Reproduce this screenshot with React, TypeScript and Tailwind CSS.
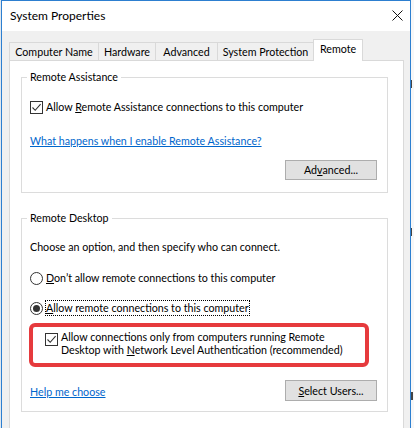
import React from "react";

function CheckBox() {
  return (
    <span className="inline-flex shrink-0 w-[13px] h-[13px] border border-[#333333] bg-white items-center justify-center">
      <svg width="11" height="11" viewBox="0 0 11 11">
        <path d="M1.5 5.5 L4.2 8.3 L9.6 2.2" fill="none" stroke="#333333" strokeWidth="1.1" />
      </svg>
    </span>
  );
}

function Radio({ on }: { on?: boolean }) {
  return (
    <span className="inline-flex shrink-0 w-[13px] h-[13px] rounded-full border border-[#333333] bg-white items-center justify-center">
      {on ? <span className="w-[7px] h-[7px] rounded-full bg-[#333333]" /> : null}
    </span>
  );
}

const tabs = [
  { label: "Computer Name", w: "w-[89px]" },
  { label: "Hardware", w: "w-[57px]" },
  { label: "Advanced", w: "w-[62px]" },
  { label: "System Protection", w: "w-[96px]" },
];

export default function App() {
  return (
    <div className="w-[414px] h-[428px] overflow-hidden flex bg-[#e4ebf2] font-['Lato',sans-serif] text-[10.7px] leading-[16px] text-black">
      <div className="w-[1px] shrink-0 bg-[#dfe7ef]" />
      {/* Window */}
      <div className="w-[410px] h-[440px] shrink-0 flex flex-col border-l border-r border-t border-[#2d7fd0] bg-[#f0f0f0]">
        {/* Title bar */}
        <div className="h-[30px] shrink-0 bg-white flex items-center justify-between pl-[8px] pr-[7px]">
          <span className="text-[12px] leading-[16px]">System Properties</span>
          <svg width="11" height="11" viewBox="0 0 11 11" className="mb-[1px]">
            <path d="M0.5 0.5 L10.5 10.5 M10.5 0.5 L0.5 10.5" stroke="#111111" strokeWidth="1" />
          </svg>
        </div>
        {/* Body */}
        <div className="pt-[7px] pl-[7px] flex flex-col">
          {/* Tabs */}
          <div className="flex items-end h-[22px]">
            {tabs.map((t) => (
              <div
                key={t.label}
                className={`${t.w} h-[18px] shrink-0 border-l border-t border-[#d9d9d9] bg-[#f0f0f0] flex items-center justify-center`}
              >
                {t.label}
              </div>
            ))}
            <div className="w-[50px] h-[22px] shrink-0 border border-b-0 border-[#d9d9d9] bg-white flex items-start justify-center pt-[1px] relative z-10 -mb-[1px]">
              Remote
            </div>
          </div>
          {/* Panel */}
          <div className="w-[395px] h-[400px] border border-[#d9d9d9] bg-white pl-[11px]">
            {/* Remote Assistance */}
            <fieldset className="mt-[8px] w-[367px] border border-[#dcdcdc] px-[8px] pb-[12px] flex flex-col">
              <legend className="px-[3px] -ml-[3px]">Remote Assistance</legend>
              <div className="mt-[14px] h-[16px] flex items-center">
                <CheckBox />
                <span className="ml-[3px]">
                  Allow <span className="underline">R</span>emote Assistance connections to this computer
                </span>
              </div>
              <div className="mt-[18px] h-[16px] flex items-center">
                <span className="text-[#0066cc] underline">What happens when I enable Remote Assistance?</span>
              </div>
              <div className="mt-[11px] flex justify-end pr-[2px]">
                <div className="w-[92px] h-[20px] bg-[#e1e1e1] border border-[#adadad] flex items-center justify-center">
                  <span>
                    Ad<span className="underline">v</span>anced...
                  </span>
                </div>
              </div>
            </fieldset>
            {/* Remote Desktop */}
            <fieldset className="mt-[17px] w-[367px] border border-[#dcdcdc] px-[8px] pb-[10px] flex flex-col">
              <legend className="px-[3px] -ml-[3px]">Remote Desktop</legend>
              <div className="mt-[13px] h-[16px] flex items-center">Choose an option, and then specify who can connect.</div>
              <div className="mt-[15px] h-[16px] flex items-center">
                <Radio />
                <span className="ml-[3px]">
                  <span className="underline">D</span>on’t allow remote connections to this computer
                </span>
              </div>
              <div className="mt-[14px] h-[16px] flex items-center">
                <Radio on />
                <span className="ml-[2px] border border-dotted border-black leading-[14px] px-[0px]">
                  <span className="underline">A</span>llow remote connections to this computer
                </span>
              </div>
              <div className="mt-[7px] -ml-[1px] w-[340px] h-[44px] border-[4px] border-[#e63a3d] rounded-[6px] flex items-start pt-[6px] pl-[12px]">
                <CheckBox />
                <span className="ml-[3px] -mt-[3px] leading-[13px] whitespace-nowrap">
                  Allow connections only from computers running Remote
                  <br />
                  Desktop with <span className="underline">N</span>etwork Level Authentication (recommended)
                </span>
              </div>
              <div className="mt-[13px] h-[21px] flex items-center justify-between pr-[2px]">
                <span className="text-[#0066cc] underline mt-[2px]">Help me choose</span>
                <div className="w-[92px] h-[21px] bg-[#e1e1e1] border border-[#adadad] flex items-center justify-center">
                  <span>
                    <span className="underline">S</span>elect Users...
                  </span>
                </div>
              </div>
            </fieldset>
          </div>
        </div>
      </div>
      <div className="w-[3px] shrink-0 bg-[#f7f7f7] flex flex-col">
        <div className="mt-[80px] h-[8px] w-[1px] bg-[#444444]" />
        <div className="mt-[140px] h-[8px] w-[1px] bg-[#444444]" />
        <div className="mt-[156px] h-[8px] w-[2px] bg-[#444444]" />
      </div>
    </div>
  );
}
